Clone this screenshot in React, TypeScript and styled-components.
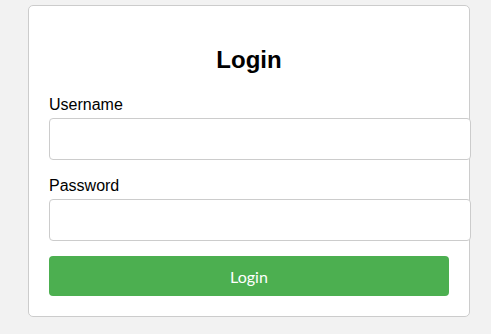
import React, { useState } from "react";
import styled, { createGlobalStyle } from "styled-components";

const GlobalStyle = createGlobalStyle`
  body {
    margin: 0;
    background-color: #f2f2f2;
    font-family: "Liberation Sans", Arial, sans-serif;
  }
`;

const App: React.FC = () => {
  const [username, setUsername] = useState("");
  const [password, setPassword] = useState("");

  return (
    <Page>
      <GlobalStyle />
      <Card onSubmit={(e) => e.preventDefault()}>
        <Title>Login</Title>
        <Label htmlFor="username">Username</Label>
        <Input
          id="username"
          type="text"
          value={username}
          onChange={(e) => setUsername(e.target.value)}
        />
        <Label htmlFor="password">Password</Label>
        <Input
          id="password"
          type="password"
          value={password}
          onChange={(e) => setPassword(e.target.value)}
        />
        <SubmitButton type="submit">Login</SubmitButton>
      </Card>
    </Page>
  );
};

export default App;

const Page = styled.div`
  display: flex;
  padding: 5px 0 0 28px;
`;

const Card = styled.form`
  width: 400px;
  padding: 20px;
  background-color: #fff;
  border: 1px solid #ccc;
  border-radius: 5px;
`;

const Title = styled.h2`
  margin: 20px 0;
  font-size: 24px;
  font-weight: bold;
  line-height: 28px;
  text-align: center;
  color: #000;
`;

const Label = styled.label`
  display: block;
  padding-top: 2px;
  margin-bottom: 4px;
  font-size: 16px;
  line-height: 18px;
  color: #000;
`;

const Input = styled.input`
  display: block;
  box-sizing: content-box;
  width: 400px;
  height: 20px;
  margin: 0 0 15px;
  padding: 10px;
  font-size: 16px;
  font-family: "Liberation Sans", Arial, sans-serif;
  border: 1px solid #ccc;
  border-radius: 4px;
  background: #fff;
`;

const SubmitButton = styled.button`
  display: block;
  box-sizing: border-box;
  width: 100%;
  height: 40px;
  padding: 10px;
  border: none;
  border-radius: 4px;
  background-color: #4caf50;
  color: #fff;
  font-family: Lato, sans-serif;
  font-size: 16px;
  cursor: pointer;
`;
